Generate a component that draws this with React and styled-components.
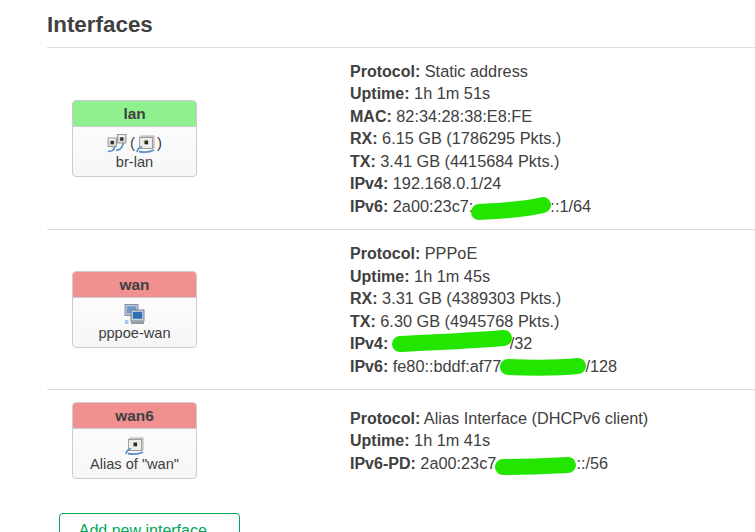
import React from 'react';
import styled, { createGlobalStyle } from 'styled-components';

const GlobalStyle = createGlobalStyle`
  html, body {
    margin: 0;
    height: 100%;
    overflow: hidden;
    background: #fff;
  }
  body {
    font-family: 'Liberation Sans', Arial, sans-serif;
    font-size: 16px;
    line-height: 22.5px;
    color: #404040;
  }
`;

const Page = styled.div`
  padding: 12px 0 0 47px;
  width: 708px;
`;

const Title = styled.h2`
  margin: 0;
  padding-bottom: 9px;
  height: 26px;
  font-size: 22.4px;
  line-height: 26px;
  font-weight: bold;
  color: #404040;
  border-bottom: 1px solid #ddd;
`;

const Row = styled.div`
  display: flex;
  align-items: center;
  padding: ${(p) => (p.$first ? '11.5px' : '12px')} 0 12px;
  border-top: ${(p) => (p.$first ? 'none' : '1px solid #ddd')};
`;

const BadgeCell = styled.div`
  width: 303px;
  padding-left: 25px;
  box-sizing: border-box;
  flex: none;
`;

const Badge = styled.div`
  width: 125px;
  height: 77px;
  box-sizing: border-box;
  border: 1px solid #ccc;
  border-radius: 4px;
  overflow: hidden;
  text-align: center;
  background: linear-gradient(#fff, #f6f6f6);
`;

const BadgeHead = styled.div`
  height: 25px;
  line-height: 25px;
  font-size: 15.4px;
  font-weight: bold;
  color: #404040;
  background: ${(p) => p.$color};
  border-bottom: 1px solid #ccc;
`;

const BadgeIcons = styled.div`
  display: flex;
  justify-content: center;
  align-items: center;
  gap: 1px;
  height: 20px;
  margin-top: 6px;
  font-size: 15px;
`;

const BadgeLabel = styled.div`
  font-size: 14.6px;
  line-height: 18px;
`;

const Paren = styled.span`
  margin-left: ${(p) => (p.$open ? '2px' : '0')};
`;

const Info = styled.div`
  flex: 1;
`;

const InfoLine = styled.div`
  height: 22.5px;
  white-space: nowrap;
  font-size: 16.3px;
`;

const Key = styled.strong`
  font-weight: bold;
  font-size: 16px;
  line-height: 1;
`;

const Redacted = styled.span`
  position: relative;
  display: inline-block;
  width: ${(p) => p.$width}px;
  height: 16px;
`;

const Scribble = styled.svg`
  position: absolute;
  left: ${(p) => p.$left}px;
  top: ${(p) => p.$top}px;
  overflow: visible;
`;

const AddButton = styled.button`
  display: block;
  margin: 22px 0 0 12px;
  width: 181px;
  height: 36px;
  box-sizing: border-box;
  padding: 0;
  font-family: inherit;
  font-size: 16px;
  color: #00a65a;
  background: #fff;
  border: 1px solid #00a65a;
  border-radius: 4px;
`;

const Port = ({ x, y, s = 9 }) => (
  <g>
    <rect x={x} y={y} width={s} height={s} fill="#d8d8d8" stroke="#858585" strokeWidth="0.8" />
    <rect x={x + 0.8} y={y + 0.8} width={s - 1.6} height="1.6" fill="#f4f4f4" />
    <rect x={x + s / 2 - 1.6} y={y + s / 2 - 1.4} width="3.2" height="3.4" fill="#2c2c2c" />
  </g>
);

const BridgeIcon = () => (
  <svg width="20" height="20" viewBox="0 0 20 20">
    <Port x={1} y={5} s={8.5} />
    <Port x={10.5} y={1.5} s={8.5} />
    <path d="M1 18c3 1 6-.5 7-4.5M9 17c3 .5 6-2 7.5-7" fill="none" stroke="#5f8fc8" strokeWidth="1.7" />
  </svg>
);

const EthernetIcon = () => (
  <svg width="20" height="20" viewBox="0 0 20 20">
    <rect x="5" y="3" width="13" height="12" fill="#dcdcdc" stroke="#a0a0a0" strokeWidth="0.8" />
    <rect x="3.5" y="4.5" width="13" height="11" fill="#ececec" stroke="#8c8c8c" strokeWidth="0.8" />
    <rect x="8.5" y="7.5" width="3.6" height="3.8" fill="#2a2a12" />
    <path d="M1 19c.5-3 2-4.5 5-5.5M3 18.5c5 1 11 .5 15-1.5" fill="none" stroke="#5f8fc8" strokeWidth="1.8" />
  </svg>
);

const TunnelIcon = () => (
  <svg width="21" height="21" viewBox="0 0 21 21">
    <rect x="1" y="0.5" width="13" height="11" fill="#b9c6d8" stroke="#77828f" strokeWidth="0.8" />
    <rect x="2.8" y="2.3" width="9.4" height="7" fill="#6f9bd0" />
    <rect x="7" y="6" width="13" height="11" fill="#cdd5df" stroke="#5f6a75" strokeWidth="0.8" />
    <rect x="8.8" y="7.8" width="9.4" height="7" fill="#2f6fb7" />
    <rect x="7" y="17.5" width="13" height="2.4" fill="#8a939d" />
    <rect x="1" y="16" width="3.4" height="4" fill="#a9c4e6" />
  </svg>
);

const Mark = ({ width, left, top, w, h, d }) => (
  <Redacted $width={width}>
    <Scribble $left={left} $top={top} width={w} height={h} viewBox={`0 0 ${w} ${h}`}>
      <path d={d} fill="none" stroke="#22e600" strokeWidth="16" strokeLinecap="round" strokeLinejoin="round" />
    </Scribble>
  </Redacted>
);

export default function App() {
  return (
    <>
      <GlobalStyle />
      <Page>
        <Title>Interfaces</Title>

        <Row $first>
          <BadgeCell>
            <Badge>
              <BadgeHead $color="#90f090">lan</BadgeHead>
              <BadgeIcons>
                <BridgeIcon />
                <Paren $open>(</Paren>
                <EthernetIcon />
                <Paren>)</Paren>
              </BadgeIcons>
              <BadgeLabel>br-lan</BadgeLabel>
            </Badge>
          </BadgeCell>
          <Info>
            <InfoLine><Key>Protocol:</Key> Static address</InfoLine>
            <InfoLine><Key>Uptime:</Key> 1h 1m 51s</InfoLine>
            <InfoLine><Key>MAC:</Key> 82:34:28:38:E8:FE</InfoLine>
            <InfoLine><Key>RX:</Key> 6.15 GB (1786295 Pkts.)</InfoLine>
            <InfoLine><Key>TX:</Key> 3.41 GB (4415684 Pkts.)</InfoLine>
            <InfoLine><Key>IPv4:</Key> 192.168.0.1/24</InfoLine>
            <InfoLine>
              <Key>IPv6:</Key> 2a00:23c7:
              <Mark width={77} left={6} top={9} w={64} h={7} d="M0 7C20 6 44 5 64 0" />
              ::1/64
            </InfoLine>
          </Info>
        </Row>

        <Row>
          <BadgeCell>
            <Badge>
              <BadgeHead $color="#f09090">wan</BadgeHead>
              <BadgeIcons><TunnelIcon /></BadgeIcons>
              <BadgeLabel>pppoe-wan</BadgeLabel>
            </Badge>
          </BadgeCell>
          <Info>
            <InfoLine><Key>Protocol:</Key> PPPoE</InfoLine>
            <InfoLine><Key>Uptime:</Key> 1h 1m 45s</InfoLine>
            <InfoLine><Key>RX:</Key> 3.31 GB (4389303 Pkts.)</InfoLine>
            <InfoLine><Key>TX:</Key> 6.30 GB (4945768 Pkts.)</InfoLine>
            <InfoLine>
              <Key>IPv4:</Key> <Mark width={117} left={7} top={5} w={104} h={6} d="M0 6C35 4 70 3 104 0" />/32
            </InfoLine>
            <InfoLine>
              <Key>IPv6:</Key> fe80::bddf:af77
              <Mark width={84} left={7} top={10} w={70} h={2} d="M0 1C25 2 50 2 70 0" />
              /128
            </InfoLine>
          </Info>
        </Row>

        <Row>
          <BadgeCell>
            <Badge>
              <BadgeHead $color="#f09090">wan6</BadgeHead>
              <BadgeIcons><EthernetIcon /></BadgeIcons>
              <BadgeLabel>Alias of "wan"</BadgeLabel>
            </Badge>
          </BadgeCell>
          <Info>
            <InfoLine><Key>Protocol:</Key> Alias Interface (DHCPv6 client)</InfoLine>
            <InfoLine><Key>Uptime:</Key> 1h 1m 41s</InfoLine>
            <InfoLine>
              <Key>IPv6-PD:</Key> 2a00:23c7
              <Mark width={80} left={7} top={12} w={65} h={2} d="M0 2C25 2 45 1 65 0" />
              ::/56
            </InfoLine>
          </Info>
        </Row>

        <AddButton>Add new interface...</AddButton>
      </Page>
    </>
  );
}
